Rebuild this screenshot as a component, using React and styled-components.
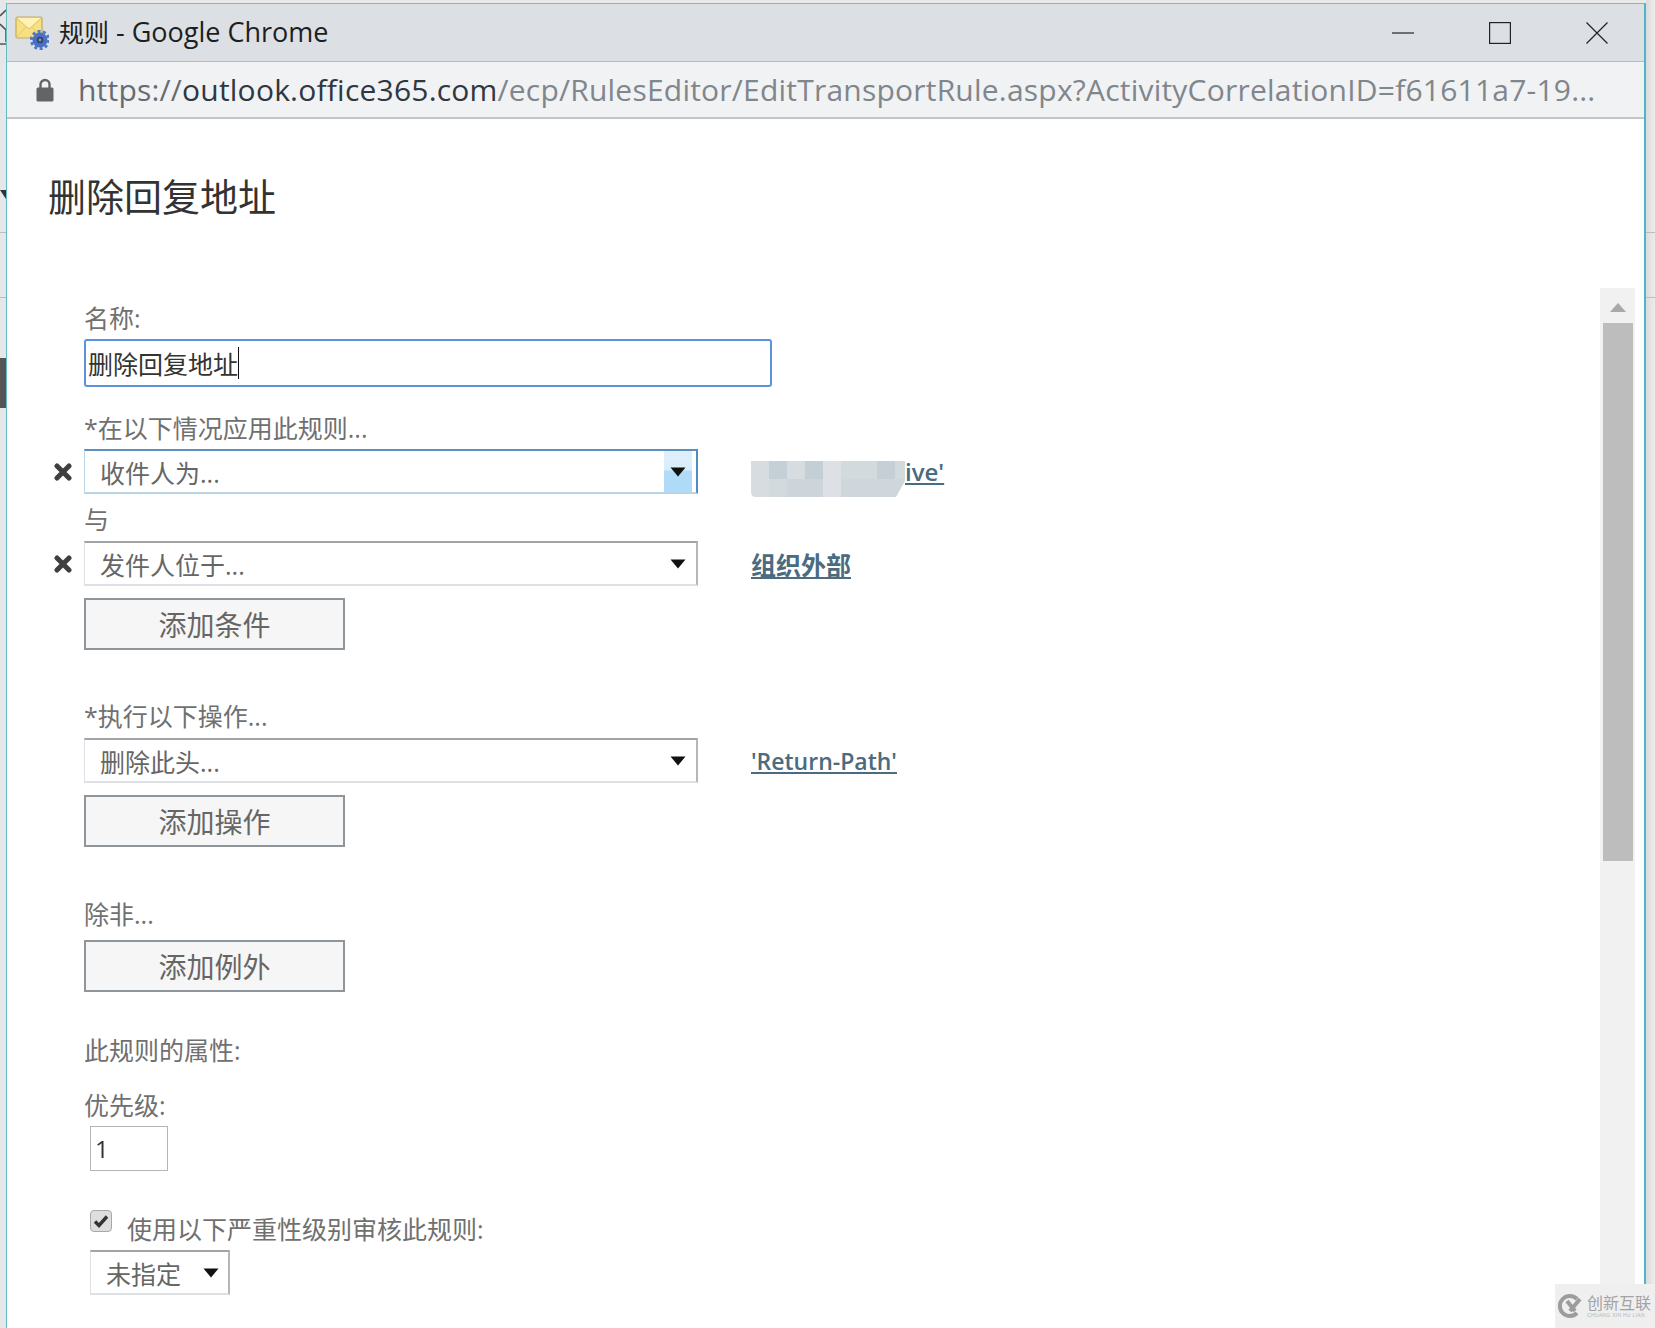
import React from 'react';
import styled, { createGlobalStyle } from 'styled-components';

const FONT = '"Open Sans", "Noto Sans CJK SC", sans-serif';

const GlobalStyle = createGlobalStyle`
  html, body {
    margin: 0;
    padding: 0;
    background: #e9e9e9;
    font-family: ${FONT};
  }
  * {
    box-sizing: border-box;
  }
`;

const Screen = styled.div`
  position: relative;
  display: flex;
  width: 1655px;
  height: 1328px;
  overflow: hidden;
`;

const Sliver = styled.div`
  flex: none;
  width: ${(p) => p.$width}px;
  background: ${(p) => p.$bg};
`;

const SliverArt = styled.svg`
  display: block;
`;

const SliverLine = styled.div`
  height: 1px;
  margin-top: ${(p) => p.$top}px;
  background: #bdbdbd;
`;

const SliverBlock = styled.div`
  height: 50px;
  margin-top: 60px;
  background: #555;
`;

const Window = styled.div`
  flex: 1;
  display: flex;
  flex-direction: column;
  margin-top: 3px;
  border-top: 1px solid #6fc0c4;
  border-left: 1px solid #62bcc2;
  border-right: 2px solid #4fb3c9;
  background: #fff;
`;

const TitleBar = styled.div`
  flex: none;
  display: flex;
  align-items: center;
  height: 58px;
  padding-left: 8px;
  background: #dce0e5;
  border-bottom: 1px solid #b9bbbd;
`;

const TitleText = styled.div`
  margin: 0 0 3px 10px;
  font-size: 27px;
  color: #1c1f22;
  white-space: nowrap;
`;

const TitleCjk = styled.span`
  font-size: 25px;
`;

const WindowControls = styled.div`
  display: flex;
  align-items: center;
  gap: 75px;
  margin-left: auto;
  padding-right: 36px;
`;

const AddressBar = styled.div`
  flex: none;
  display: flex;
  align-items: center;
  height: 57px;
  padding-left: 29px;
  background: #f1f2f4;
  border-bottom: 2px solid #c4c5c6;
`;

const Url = styled.div`
  margin: 0 0 1px 24px;
  font-size: 30px;
  letter-spacing: 0.215px;
  color: #7f868c;
  white-space: nowrap;
`;

const UrlScheme = styled.span`
  color: #666c72;
`;

const UrlHost = styled.span`
  color: #2f3740;
`;

const Body = styled.div`
  flex: 1;
  display: flex;
  min-height: 0;
`;

const Main = styled.div`
  flex: 1;
  padding: 52px 0 0 41px;
`;

const Heading = styled.h1`
  margin: 0;
  height: 50px;
  font-size: 38px;
  line-height: 50px;
  font-weight: 400;
  color: #333;
`;

const Form = styled.div`
  padding-left: 36px;
`;

const Label = styled.div`
  height: 30px;
  margin-top: ${(p) => p.$top}px;
  font-size: 25px;
  line-height: 30px;
  color: #707070;
  white-space: nowrap;
`;

const NameInput = styled.div`
  display: flex;
  align-items: center;
  width: 688px;
  height: 48px;
  margin-top: 6px;
  padding-left: 2px;
  border: 2px solid #5b93dc;
  border-radius: 3px;
  font-size: 25px;
  color: #333;
`;

const Caret = styled.span`
  width: 1px;
  height: 32px;
  background: #111;
`;

const RuleRow = styled.div`
  display: flex;
  align-items: center;
  margin-top: ${(p) => p.$top}px;
  margin-left: ${(p) => (p.$removable ? -30 : 0)}px;
`;

const RemoveIcon = styled.svg`
  flex: none;
  width: 18px;
  height: 18px;
  margin-right: 12px;
`;

const Select = styled.div`
  flex: none;
  display: flex;
  align-items: center;
  width: ${(p) => p.$width}px;
  height: 45px;
  padding-left: 15px;
  border-style: solid;
  border-width: 2px 2px 2px 1px;
  border-color: ${(p) =>
    p.$focused
      ? '#5b8fbf #4f8dc0 #b9d6e6 #b9d6e6'
      : '#a0a3a8 #b4b6ba #dde0e4 #dde0e4'};
  font-size: 25px;
  color: #666;
  white-space: nowrap;
`;

const ArrowCell = styled.div`
  display: flex;
  align-items: center;
  justify-content: center;
  align-self: stretch;
  width: 28px;
  margin-left: auto;
  margin-right: ${(p) => p.$right}px;
  background: ${(p) =>
    p.$focused ? 'linear-gradient(#e0f0fb, #d8edfb 45%, #b0dcf7 50%, #aedbf7)' : 'transparent'};
`;

const ArrowIcon = styled.svg`
  width: 16px;
  height: 10px;
`;

const ValueLink = styled.a`
  display: flex;
  align-items: center;
  margin-left: 53px;
  font-size: ${(p) => p.$size}px;
  font-weight: 600;
  color: #4a6b80;
  text-decoration: underline;
`;

const BlurPatch = styled.svg`
  display: block;
  width: 154px;
  height: 36px;
  transform: translateY(7px);
`;

const AddButton = styled.button`
  display: block;
  width: 261px;
  height: 52px;
  margin-top: ${(p) => p.$top}px;
  padding: 0;
  border: 2px solid #8f969b;
  background: #f6f6f6;
  font-family: ${FONT};
  font-size: 28px;
  color: #666;
`;

const PriorityBox = styled.div`
  display: flex;
  align-items: center;
  width: 78px;
  height: 45px;
  margin: 6px 0 0 6px;
  padding-left: 4px;
  border: 1px solid #b5b5b5;
  font-size: 24px;
  color: #333;
`;

const AuditRow = styled.div`
  display: flex;
  align-items: flex-start;
  height: 35px;
  margin: 39px 0 0 6px;
`;

const CheckBox = styled.div`
  display: flex;
  align-items: center;
  justify-content: center;
  width: 22px;
  height: 22px;
  border: 1px solid #a8a8a8;
  border-radius: 4px;
  background: #dedede;
`;

const AuditLabel = styled.div`
  margin: 3px 0 0 15px;
  font-size: 25px;
  line-height: 32px;
  color: #707070;
  white-space: nowrap;
`;

const SeverityWrap = styled.div`
  margin: 5px 0 0 6px;
`;

const ScrollTrack = styled.div`
  flex: none;
  display: flex;
  flex-direction: column;
  align-items: center;
  width: 35px;
  margin: 169px 9px 0 0;
  background: #f1f1f1;
`;

const ScrollArrow = styled.svg`
  width: 16px;
  height: 9px;
  margin: 15px 0 11px;
`;

const ScrollThumb = styled.div`
  width: 30px;
  height: 538px;
  background: #bdbdbd;
`;

const Watermark = styled.div`
  position: absolute;
  right: 0;
  bottom: 0;
  display: flex;
  align-items: center;
  gap: 3px;
  width: 100px;
  height: 44px;
  padding-left: 3px;
  background: #efefef;
`;

const WatermarkText = styled.div`
  font-size: 16px;
  line-height: 17px;
  color: #a3a3a3;
  white-space: nowrap;
`;

const WatermarkSub = styled.div`
  font-size: 5px;
  line-height: 6px;
  letter-spacing: 0.3px;
  color: #b5b5b5;
  font-family: "Liberation Sans", sans-serif;
`;

const MailGearIcon = () => (
  <svg width="34" height="34" viewBox="0 0 34 34">
    <rect x="1" y="1" width="26" height="21" rx="1.5" fill="#f7e07f" stroke="#c5a860" strokeWidth="1.2" />
    <path d="M1.5 2 L14 13 L26.5 2" fill="#fff2b5" stroke="#d9bf72" strokeWidth="1" />
    <path d="M1.5 21.5 L11 11 M26.5 21.5 L17 11" stroke="#e3cb80" strokeWidth="1" fill="none" />
    <circle cx="25" cy="24" r="7.5" fill="#4a70c0" />
    <circle cx="25" cy="24" r="8.6" fill="none" stroke="#4f78c8" strokeWidth="3" strokeDasharray="3 2.4" />
    <circle cx="25" cy="24" r="3.2" fill="#2f4470" />
    <circle cx="25" cy="24" r="1.4" fill="#7f9ad0" />
  </svg>
);

const LockIcon = () => (
  <svg width="18" height="24" viewBox="0 0 18 24">
    <path d="M4.5 10 V6.5 a4.5 4.5 0 0 1 9 0 V10" fill="none" stroke="#636468" strokeWidth="2.4" />
    <rect x="0.5" y="9.5" width="17" height="14" rx="1.5" fill="#636468" />
  </svg>
);

const RemoveGlyph = () => (
  <RemoveIcon viewBox="0 0 18 18">
    <path d="M3 3 L15 15 M15 3 L3 15" stroke="#3f3f3f" strokeWidth="5" strokeLinecap="round" />
  </RemoveIcon>
);

const Arrow = () => (
  <ArrowIcon viewBox="0 0 16 10">
    <path d="M0.5 0.5 H15.5 L8 9.5 Z" fill="#111" />
  </ArrowIcon>
);

const MOSAIC = [
  ['#d6dce0', '#c5d0d6', '#d6dce0', '#c3cfd5', '#dde1e5', '#d3dade', '#d3dade', '#c5cfd5', '#d3dade'],
  ['#d6dce0', '#d3dade', '#cdd5da', '#cdd5da', '#dde1e5', '#d0d7dc', '#d0d7dc', '#d0d7dc', '#d0d7dc']
];

const BlurredValue = () => (
  <BlurPatch viewBox="0 0 154 36">
    <clipPath id="patch">
      <path d="M0 0 H154 V20 L145 36 H5 Q0 36 0 31 Z" />
    </clipPath>
    <g clipPath="url(#patch)">
      {MOSAIC.map((row, y) =>
        row.map((color, x) => (
          <rect key={`${x}-${y}`} x={x * 18} y={y * 18} width="18" height="18" fill={color} />
        ))
      )}
    </g>
  </BlurPatch>
);

const RuleSelect = ({ text, focused }) => (
  <Select $width={614} $focused={focused}>
    {text}
    <ArrowCell $focused={focused} $right={4}>
      <Arrow />
    </ArrowCell>
  </Select>
);

const App = () => (
  <Screen>
    <GlobalStyle />
    <Sliver $width={6} $bg="#e6e7e8">
      <SliverArt width="6" height="231" viewBox="0 0 6 231">
        <path d="M0 16 L6 10 M0 24 L6 30 L6 42 M0 44 H6" stroke="#555" strokeWidth="1.6" fill="none" />
        <path d="M0 190 H6 V199 Z" fill="#333" />
      </SliverArt>
      <SliverLine $top={1} />
      <SliverLine $top={64} />
      <SliverBlock />
    </Sliver>

    <Window>
      <TitleBar>
        <MailGearIcon />
        <TitleText>
          <TitleCjk>规则</TitleCjk> - Google Chrome
        </TitleText>
        <WindowControls>
          <svg width="22" height="22" viewBox="0 0 22 22">
            <path d="M0 11 H22" stroke="#222" strokeWidth="1.2" />
          </svg>
          <svg width="22" height="22" viewBox="0 0 22 22">
            <rect x="0.6" y="0.6" width="20.8" height="20.8" fill="none" stroke="#222" strokeWidth="1.2" />
          </svg>
          <svg width="22" height="22" viewBox="0 0 22 22">
            <path d="M0.5 0.5 L21.5 21.5 M21.5 0.5 L0.5 21.5" stroke="#222" strokeWidth="1.2" />
          </svg>
        </WindowControls>
      </TitleBar>

      <AddressBar>
        <LockIcon />
        <Url>
          <UrlScheme>https://</UrlScheme>
          <UrlHost>outlook.office365.com</UrlHost>
          /ecp/RulesEditor/EditTransportRule.aspx?ActivityCorrelationID=f61611a7-19...
        </Url>
      </AddressBar>

      <Body>
        <Main>
          <Heading>删除回复地址</Heading>
          <Form>
            <Label $top={82}>名称:</Label>
            <NameInput>
              删除回复地址
              <Caret />
            </NameInput>

            <Label $top={26}>*在以下情况应用此规则...</Label>
            <RuleRow $top={6} $removable>
              <RemoveGlyph />
              <RuleSelect text="收件人为..." focused />
              <ValueLink $size={24}>
                <BlurredValue />
                ive'
              </ValueLink>
            </RuleRow>
            <Label $top={10}>与</Label>
            <RuleRow $top={7} $removable>
              <RemoveGlyph />
              <RuleSelect text="发件人位于..." />
              <ValueLink $size={25}>组织外部</ValueLink>
            </RuleRow>
            <AddButton $top={12}>添加条件</AddButton>

            <Label $top={51}>*执行以下操作...</Label>
            <RuleRow $top={7}>
              <RuleSelect text="删除此头..." />
              <ValueLink $size={23}>'Return-Path'</ValueLink>
            </RuleRow>
            <AddButton $top={12}>添加操作</AddButton>

            <Label $top={52}>除非...</Label>
            <AddButton $top={11}>添加例外</AddButton>

            <Label $top={43}>此规则的属性:</Label>
            <Label $top={25}>优先级:</Label>
            <PriorityBox>1</PriorityBox>
            <AuditRow>
              <CheckBox>
                <svg width="16" height="14" viewBox="0 0 16 14">
                  <path d="M2 7.5 L6 11.5 L14 2.5" fill="none" stroke="#333" strokeWidth="3.4" />
                </svg>
              </CheckBox>
              <AuditLabel>使用以下严重性级别审核此规则:</AuditLabel>
            </AuditRow>
            <SeverityWrap>
              <Select $width={140}>
                未指定
                <ArrowCell $right={3}>
                  <Arrow />
                </ArrowCell>
              </Select>
            </SeverityWrap>
          </Form>
        </Main>

        <ScrollTrack>
          <ScrollArrow viewBox="0 0 16 9">
            <path d="M8 0 L16 9 H0 Z" fill="#a9a9a9" />
          </ScrollArrow>
          <ScrollThumb />
        </ScrollTrack>
      </Body>
    </Window>

    <Sliver $width={9} $bg="linear-gradient(90deg, #dcdcdc, #ececec)">
      <SliverLine $top={232} />
      <SliverLine $top={64} />
    </Sliver>

    <Watermark>
      <svg width="26" height="26" viewBox="0 0 26 26">
        <path d="M19 6 A10 10 0 1 0 19 20" fill="none" stroke="#9c9c9c" strokeWidth="4" />
        <path d="M9 8 L17 18 M22 6 L12 18" stroke="#9c9c9c" strokeWidth="4" />
      </svg>
      <div>
        <WatermarkText>创新互联</WatermarkText>
        <WatermarkSub>CHUANG XIN HU LIAN</WatermarkSub>
      </div>
    </Watermark>
  </Screen>
);

export default App;
